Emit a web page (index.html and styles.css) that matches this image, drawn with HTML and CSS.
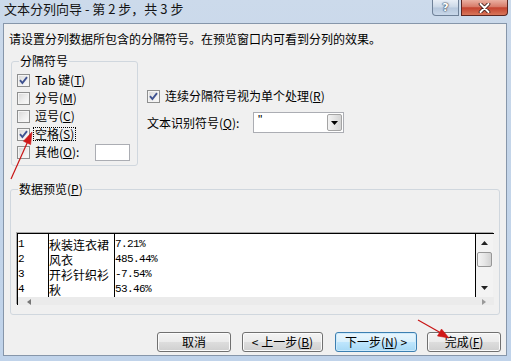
FILE: index.html
```html
<!DOCTYPE html>
<html lang="zh-CN">
<head>
<meta charset="utf-8">
<title>文本分列向导</title>
<link rel="stylesheet" href="styles.css">
</head>
<body>
<div class="window">
  <div class="titlebar">
    <span class="title">文本分列向导 - 第 2 步，共 3 步</span>
    <div class="caption-btns">
      <span class="cbtn help"><span class="q">?</span></span>
      <span class="cbtn close">
        <svg width="13" height="10" viewBox="0 0 13 10"><path d="M2.5 1 L10.5 9 M10.5 1 L2.5 9" stroke="#3a1714" stroke-width="3.6" stroke-linecap="round"/><path d="M2.5 1 L10.5 9 M10.5 1 L2.5 9" stroke="#fff" stroke-width="2" stroke-linecap="round"/></svg>
      </span>
    </div>
  </div>
  <div class="client">
    <p class="intro">请设置分列数据所包含的分隔符号。在预览窗口内可看到分列的效果。</p>
    <div class="top">
      <fieldset class="group sep">
        <legend>分隔符号</legend>
        <div class="row"><span class="cb"><svg width="11" height="11" viewBox="0 0 11 11"><path d="M2 5.2 L4.4 8 L9 2.2" stroke="#3f5290" stroke-width="1.9" fill="none"/></svg></span><span class="lbl">Tab 键(<u>T</u>)</span></div>
        <div class="row"><span class="cb"></span><span class="lbl">分号(<u>M</u>)</span></div>
        <div class="row"><span class="cb"></span><span class="lbl">逗号(<u>C</u>)</span></div>
        <div class="row"><span class="cb focused-cb"><svg width="11" height="11" viewBox="0 0 11 11"><path d="M2 5.2 L4.4 8 L9 2.2" stroke="#3f5290" stroke-width="1.9" fill="none"/></svg></span><span class="lbl focus">空格(<u>S</u>)</span></div>
        <div class="row"><span class="cb"></span><span class="lbl">其他(<u>O</u>):</span><span class="textbox"></span></div>
      </fieldset>
      <div class="options">
        <div class="row"><span class="cb"><svg width="11" height="11" viewBox="0 0 11 11"><path d="M2 5.2 L4.4 8 L9 2.2" stroke="#3f5290" stroke-width="1.9" fill="none"/></svg></span><span class="lbl">连续分隔符号视为单个处理(<u>R</u>)</span></div>
        <div class="row qual">
          <span class="qlabel">文本识别符号(<u>Q</u>):</span>
          <span class="combo"><span class="val">"</span><span class="drop"><svg width="7" height="4" viewBox="0 0 7 4"><path d="M0 0 H7 L3.5 4 Z" fill="#000"/></svg></span></span>
        </div>
      </div>
    </div>
    <fieldset class="group preview">
      <legend>数据预览(<u>P</u>)</legend>
      <div class="pbox">
        <div class="pmain">
          <div class="grid">
            <div class="col c1">
              <div class="cell num">1</div>
              <div class="cell num">2</div>
              <div class="cell num">3</div>
              <div class="cell num">4</div>
            </div>
            <div class="col c2">
              <div class="cell">秋装连衣裙</div>
              <div class="cell">风衣</div>
              <div class="cell">开衫针织衫</div>
              <div class="cell">秋</div>
            </div>
            <div class="col c3">
              <div class="cell num">7.21%</div>
              <div class="cell num">485.44%</div>
              <div class="cell num">-7.54%</div>
              <div class="cell num">53.46%</div>
            </div>
          </div>
          <div class="vscroll">
            <svg class="arr-up" width="7" height="4" viewBox="0 0 7 4"><path d="M0 4 H7 L3.5 0 Z" fill="#222"/></svg>
            <span class="thumb"></span>
            <svg class="arr-down" width="7" height="4" viewBox="0 0 7 4"><path d="M0 0 H7 L3.5 4 Z" fill="#222"/></svg>
          </div>
        </div>
        <div class="hscroll">
          <svg class="arr-left" width="4" height="6" viewBox="0 0 4 6"><path d="M4 0 V6 L0 3 Z" fill="#777"/></svg>
          <svg class="arr-right" width="4" height="6" viewBox="0 0 4 6"><path d="M0 0 V6 L4 3 Z" fill="#999"/></svg>
        </div>
      </div>
    </fieldset>
    <div class="buttons">
      <button class="btn b-cancel">取消</button>
      <button class="btn b-prev">&lt; 上一步(<u>B</u>)</button>
      <button class="btn b-next default">下一步(<u>N</u>) &gt;</button>
      <button class="btn b-finish">完成(<u>F</u>)</button>
    </div>
  </div>
  <svg class="arrows" width="511" height="361" viewBox="0 0 511 361">
    <g stroke="#c81414" stroke-width="1.2" fill="#d01818">
      <line x1="11" y1="179" x2="28" y2="141"/>
      <polygon points="32,132 30.6,144.6 23.4,141.2" stroke-width="0.6"/>
      <line x1="418" y1="320" x2="441" y2="333"/>
      <polygon points="449,338 437.5,336 441.5,329" stroke-width="0.6"/>
    </g>
  </svg>
</div>
</body>
</html>
```

FILE: styles.css
```css
html, body {
  margin: 0;
  padding: 0;
}
body {
  width: 511px;
  height: 361px;
  overflow: hidden;
  font-family: "Noto Sans CJK SC", "Noto Sans", sans-serif;
  font-size: 12px;
  color: #000;
}
.window {
  position: relative;
  width: 511px;
  height: 361px;
  box-sizing: border-box;
  display: flex;
  flex-direction: column;
  background: linear-gradient(180deg, #ccdaeb 0%, #c4d5e9 40%, #c0d3ea 100%);
}
.titlebar {
  height: 23px;
  flex: none;
  display: flex;
  align-items: flex-start;
  padding-left: 4px;
}
.title {
  font-size: 13px;
  line-height: 17px;
  margin-top: 0;
  color: #151515;
}
.caption-btns {
  margin-left: auto;
  margin-right: 3px;
  display: flex;
  gap: 2px;
}
.cbtn {
  height: 16px;
  box-sizing: border-box;
  display: flex;
  align-items: center;
  justify-content: center;
  border: 1px solid #6f8198;
  border-top: none;
}
.help {
  width: 27px;
  border-radius: 0 0 0 4px;
  background: linear-gradient(180deg, #e8eef6 0%, #cbd8e7 48%, #b6c7dc 52%, #c9d8ea 100%);
}
.help .q {
  font-family: "DejaVu Sans", sans-serif;
  font-weight: bold;
  font-size: 11px;
  line-height: 12px;
  color: #fff;
  text-shadow: 0 0 1px #39485c, 0 0 1px #39485c, 0 0 2px #39485c;
}
.close {
  width: 47px;
  border-radius: 0 0 4px 0;
  border-color: #5c2621;
  background: linear-gradient(180deg, #eab0a2 0%, #d77b69 45%, #c4432f 52%, #d8765a 100%);
}
.client {
  flex: 1;
  margin: 0 4px 5px 3px;
  background: #f0f0f0;
  border: 1px solid #8696aa;
  display: flex;
  flex-direction: column;
  padding-top: 7px;
  min-height: 0;
}
.intro {
  margin: 0 0 0 5px;
  line-height: 16px;
}
.top {
  display: flex;
  align-items: flex-start;
  margin-top: 7px;
}
.group {
  border: 1px solid #d0d7de;
  border-radius: 3px;
  box-sizing: border-box;
  min-width: 0;
}
.group legend {
  padding: 0 1px;
  line-height: 14px;
  font-size: 12px;
}
.group.sep {
  margin: 0 0 0 7px;
  width: 127px;
  padding: 3px 4px 4px 5px;
}
.group.sep legend {
  margin-left: 2px;
}
.row {
  display: flex;
  align-items: center;
  height: 18px;
}
.cb {
  width: 13px;
  height: 13px;
  flex: none;
  box-sizing: border-box;
  border: 1px solid #8e8f8f;
  background: linear-gradient(135deg, #d6d6d6 0%, #eeeeee 55%, #fbfbfb 100%);
  box-shadow: inset 0 0 0 1px #f4f4f4;
  display: inline-flex;
  align-items: center;
  justify-content: center;
  margin-right: 5px;
}
.cb.focused-cb {
  margin-right: 3px;
}
.lbl {
  line-height: 14px;
  white-space: nowrap;
}
.lbl.focus {
  border: 1px dotted #000;
  padding: 0 1px;
  line-height: 12px;
}
.textbox {
  margin-left: auto;
  margin-right: 3px;
  width: 35px;
  height: 17px;
  box-sizing: border-box;
  background: #fff;
  border: 1px solid #abadb3;
}
.options {
  margin-left: 9px;
  margin-top: 33px;
}
.qual {
  height: 21px;
  margin-top: 7px;
}
.qlabel {
  width: 106px;
  white-space: nowrap;
}
.combo {
  width: 91px;
  height: 21px;
  box-sizing: border-box;
  border: 1px solid #abadb3;
  background: #fff;
  display: flex;
}
.combo .val {
  flex: 1;
  padding-left: 4px;
  line-height: 14px;
  font-family: "Liberation Sans", sans-serif;
}
.combo .drop {
  width: 15px;
  margin: 1px;
  box-sizing: border-box;
  border: 1px solid #a4a4a4;
  border-radius: 2px;
  background: linear-gradient(90deg, #f3f3f3 0%, #e4e4e4 50%, #d4d4d4 100%);
  display: flex;
  align-items: center;
  justify-content: center;
}
.group.preview {
  margin: 16px 0 0 6px;
  width: 490px;
  padding: 37px 6px 9px 6px;
}
.group.preview legend {
  margin-left: 1px;
}
.pbox {
  width: 476px;
  border-top: 1px solid #000;
  border-left: 1px solid #000;
  box-shadow: -1px -1px 0 #a9a9a9;
}
.pmain {
  display: flex;
  height: 63px;
}
.grid {
  display: flex;
  width: 458px;
  box-sizing: border-box;
  background: #fff;
  border-right: 1px solid #000;
}
.col {
  padding-top: 3px;
  border-right: 1px solid #000;
  overflow: hidden;
}
.c1 { width: 30px; flex: none; }
.c2 { width: 65px; flex: none; }
.c3 { flex: 1; border-right: none; }
.cell {
  height: 15px;
  line-height: 15px;
  white-space: nowrap;
}
.num {
  font-family: "Liberation Mono", monospace;
  font-size: 11px;
  letter-spacing: -0.6px;
}
.vscroll {
  width: 17px;
  flex: none;
  background: #f3f3f3;
  display: flex;
  flex-direction: column;
  align-items: center;
}
.arr-up {
  margin-top: 7px;
}
.thumb {
  margin-top: 7px;
  width: 15px;
  height: 15px;
  box-sizing: border-box;
  border: 1px solid #979797;
  border-radius: 2px;
  background: linear-gradient(90deg, #f4f4f4 0%, #e6e6e6 50%, #d2d2d2 100%);
}
.arr-down {
  margin-top: auto;
  margin-bottom: 7px;
}
.hscroll {
  height: 8px;
  background: #ebebeb;
  display: flex;
  align-items: flex-end;
  padding: 0 8px;
}
.arr-left {
  margin-left: 1px;
}
.arr-right {
  margin-left: auto;
}
.buttons {
  display: flex;
  justify-content: flex-end;
  margin-top: 17px;
  padding-right: 5px;
}
.btn {
  height: 20px;
  box-sizing: border-box;
  padding: 0;
  font-family: "Noto Sans CJK SC", sans-serif;
  font-size: 12px;
  line-height: 16px;
  color: #000;
  border: 1px solid #707070;
  border-radius: 3px;
  background: linear-gradient(180deg, #f3f3f3 0%, #ebebeb 48%, #dddddd 52%, #cfcfcf 100%);
  box-shadow: inset 0 0 0 1px #fbfbfb;
}
.btn.default {
  border-color: #3c7fb1;
  background: linear-gradient(180deg, #eaf6fd 0%, #d9f0fc 48%, #bee6fd 52%, #a7d9f5 100%);
  box-shadow: inset 0 0 0 1px #cdeafb;
}
.b-cancel { width: 74px; }
.b-prev { width: 81px; margin-left: 11px; }
.b-next { width: 82px; margin-left: 12px; }
.b-finish { width: 74px; margin-left: 10px; }
.arrows {
  position: absolute;
  left: 0;
  top: 0;
  pointer-events: none;
}
```
